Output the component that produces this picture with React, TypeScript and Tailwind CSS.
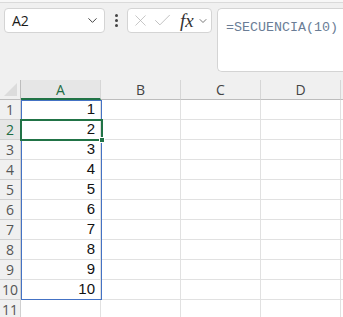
import { ChevronDown, X, Check } from "lucide-react";

const cols = ["A", "B", "C", "D"];
const rows = [1, 2, 3, 4, 5, 6, 7, 8, 9, 10, 11];

const App = () => {
  return (
    <div
      className="w-[343px] h-[317px] overflow-hidden bg-[#f0f0f0] text-[#222]"
      style={{ fontFamily: "'Open Sans', 'Liberation Sans', sans-serif" }}
    >
      {/* top strip */}
      <div className="h-[3px] bg-[#f7f7f7] border-b border-[#dadada]" />

      {/* formula bar */}
      <div className="flex items-start h-[77px] pt-[5px] pl-[4px]">
        <div className="flex items-center justify-between w-[101px] h-[25px] bg-white border border-[#d4d4d4] rounded-[4px] pl-[7px] pr-[4px]">
          <span className="text-[14px] text-[#1a1a1a]">A2</span>
          <ChevronDown size={15} strokeWidth={1.6} className="text-[#444]" />
        </div>
        <div className="flex flex-col items-center justify-center gap-[2px] w-[22px] h-[25px]">
          <span className="w-[3px] h-[3px] bg-[#444] rounded-full" />
          <span className="w-[3px] h-[3px] bg-[#444] rounded-full" />
          <span className="w-[3px] h-[3px] bg-[#444] rounded-full" />
        </div>
        <div className="flex items-center w-[85px] h-[25px] bg-white border border-[#d4d4d4] rounded-[4px] pl-[3px]">
          <X size={19} strokeWidth={0.9} className="text-[#b0b0b0]" />
          <Check size={21} strokeWidth={0.9} className="text-[#b0b0b0] ml-[2px]" />
          <span
            className="ml-[7px] text-[19px] italic text-[#333] leading-none"
            style={{ fontFamily: "'Liberation Serif', serif" }}
          >
            fx
          </span>
          <ChevronDown size={12} strokeWidth={1.6} className="text-[#555] ml-[3px]" />
        </div>
        <div className="ml-[5px] flex-1 h-[64px] bg-white border border-[#d4d4d4] rounded-l-[5px] border-r-0 pl-[8px] pt-[4px]">
          <span
            className="text-[13.33px] text-[#6a7d96]"
            style={{ fontFamily: "'Liberation Mono', monospace" }}
          >
            =SECUENCIA(10)
          </span>
        </div>
      </div>

      {/* sheet */}
      <div className="relative bg-white">
        {/* column headers */}
        <div className="flex h-[20px] bg-[#f0f0f0]">
          <div className="relative w-[21px] border-r border-b border-[#bdbdbd]">
            <div
              className="absolute right-[3px] bottom-[3px] w-[13px] h-[13px] bg-[#dcdcdc]"
              style={{ clipPath: "polygon(100% 0, 100% 100%, 0 100%)" }}
            />
          </div>
          {cols.map((c) => (
            <div
              key={c}
              className={`w-[80px] flex items-center justify-center text-[14px] border-r border-[#d6d6d6] ${
                c === "A"
                  ? "bg-[#e6e6e6] border-b-2 border-b-[#217346] text-[#1e6b43]"
                  : "border-b border-b-[#bdbdbd] text-[#444]"
              }`}
            >
              {c}
            </div>
          ))}
          <div className="flex-1 border-b border-[#bdbdbd]" />
        </div>

        {rows.map((r) => (
          <div key={r} className="flex h-[20px]">
            <div
              className={`w-[21px] flex items-center justify-center text-[14px] border-r border-b border-[#d0d0d0] ${
                r === 2 ? "bg-[#e6e6e6] text-[#1e6b43]" : "bg-[#f0f0f0] text-[#555]"
              }`}
            >
              {r}
            </div>
            {cols.map((c) => (
              <div
                key={c}
                className="w-[80px] flex items-center justify-end pr-[5px] text-[15px] text-[#111] border-r border-b border-[#e1e1e1]"
                style={{ fontFamily: "'Liberation Sans', sans-serif" }}
              >
                {c === "A" && r <= 10 ? r : ""}
              </div>
            ))}
            <div className="flex-1 border-b border-[#e1e1e1]" />
          </div>
        ))}

        {/* spill range outline A1:A10 */}
        <div className="absolute left-[21px] top-[20px] w-[81px] h-[200px] border border-[#4472c4] pointer-events-none" />

        {/* active cell A2 */}
        <div className="absolute left-[20px] top-[39px] w-[83px] h-[22px] border-2 border-[#217346] pointer-events-none" />
        <div className="absolute left-[99px] top-[57px] w-[6px] h-[6px] bg-[#217346] border border-white pointer-events-none" />
      </div>
    </div>
  );
};

export default App;
